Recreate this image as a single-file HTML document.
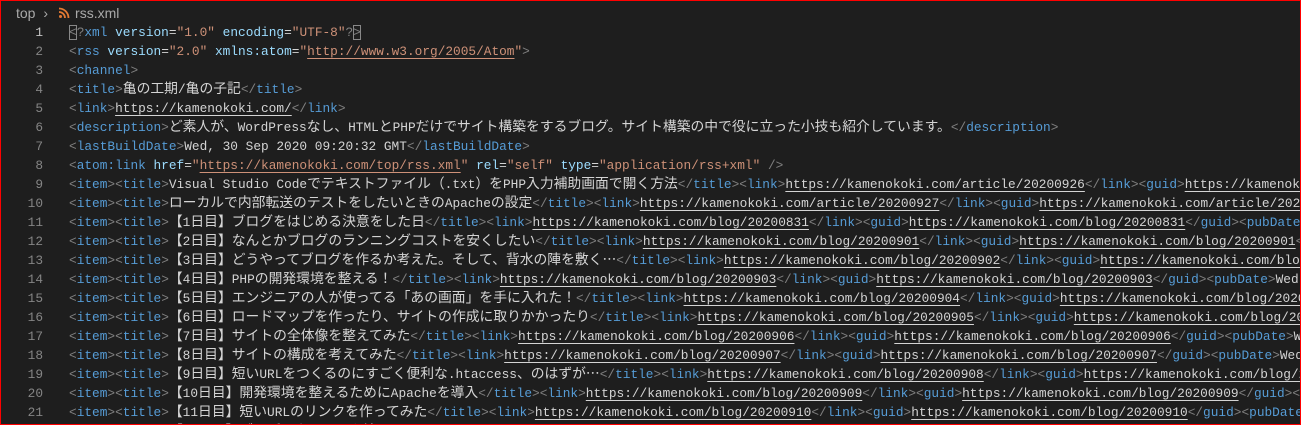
<!DOCTYPE html><html><head><meta charset="utf-8"><style>
html,body{margin:0;padding:0;background:#1e1e1e;}
#w{position:relative;width:1299px;height:423px;border:1px solid #f00;overflow:hidden;background:#1e1e1e;}
#bc{position:absolute;left:15px;top:3px;height:18px;font:14px "Liberation Sans","Noto Sans CJK JP",sans-serif;color:#a9a9a9;line-height:18px;white-space:nowrap}
#bc svg{vertical-align:-1px}
.ln{position:absolute;left:0;width:42px;text-align:right;color:#858585;font:12.8px "Liberation Mono",monospace;line-height:19px}
.cl{position:absolute;left:68px;height:19px;white-space:pre;color:#d4d4d4;font:12.8px "Liberation Mono","Noto Sans CJK JP",monospace;line-height:19px}
.j{font-family:"Noto Sans CJK JP",sans-serif;font-size:13.8px;line-height:1}
.p{color:#808080}.t{color:#569cd6}.a{color:#9cdcfe}.s{color:#ce9178}.u{text-decoration:underline;text-underline-offset:3px}
.bx{outline:1px solid #888;outline-offset:-1px}
</style></head><body><div id="w">
<div id="bc">top <span style="margin:0 10px 0 4px">&#x203A;</span><svg width="12" height="12" viewBox="0 0 12 12"><circle cx="2.5" cy="9.5" r="1.5" fill="#e37933"/><path d="M1 5a6 6 0 0 1 6 6M1 1.5a9.5 9.5 0 0 1 9.5 9.5" stroke="#e37933" stroke-width="1.8" fill="none"/></svg><span style="margin-left:5px">rss.xml</span></div>
<div id="code"></div>
</div>
<script>
var L=[
'<?xml version="1.0" encoding="UTF-8"?>',
'<rss version="2.0" xmlns:atom="http://www.w3.org/2005/Atom">',
'<channel>',
'<title>亀の工期/亀の子記</title>',
'<link>https://kamenokoki.com/</link>',
'<description>ど素人が、WordPressなし、HTMLとPHPだけでサイト構築をするブログ。サイト構築の中で役に立った小技も紹介しています。</description>',
'<lastBuildDate>Wed, 30 Sep 2020 09:20:32 GMT</lastBuildDate>',
'<atom:link href="https://kamenokoki.com/top/rss.xml" rel="self" type="application/rss+xml" />'
];
function it(t,u){return '<item><title>'+t+'</title><link>'+u+'</link><guid>'+u+'</guid><pubDate>Wed, 30 Sep 2020</pubDate></item>';}
L.push(it('Visual Studio Codeでテキストファイル（.txt）をPHP入力補助画面で開く方法','https://kamenokoki.com/article/20200926'));
L.push(it('ローカルで内部転送のテストをしたいときのApacheの設定','https://kamenokoki.com/article/20200927'));
var T=[['【1日目】ブログをはじめる決意をした日','0831'],['【2日目】なんとかブログのランニングコストを安くしたい','0901'],['【3日目】どうやってブログを作るか考えた。そして、背水の陣を敷く…','0902'],['【4日目】PHPの開発環境を整える！','0903'],['【5日目】エンジニアの人が使ってる「あの画面」を手に入れた！','0904'],['【6日目】ロードマップを作ったり、サイトの作成に取りかかったり','0905'],['【7日目】サイトの全体像を整えてみた','0906'],['【8日目】サイトの構成を考えてみた','0907'],['【9日目】短いURLをつくるのにすごく便利な.htaccess、のはずが…','0908'],['【10日目】開発環境を整えるためにApacheを導入','0909'],['【11日目】短いURLのリンクを作ってみた','0910'],['【12日目】ブログのタイトルを決めてみた','0911']];
T.forEach(function(x){L.push(it(x[0],'https://kamenokoki.com/blog/2020'+x[1]));});
function esc(s){return s.replace(/&/g,'&amp;').replace(/</g,'&lt;').replace(/>/g,'&gt;');}
function cjk(s){return esc(s).replace(/([^\x00-\x7f]+)/g,'<span class="j">$1</span>');}
function tag(s){
 var m=s.match(/^(<\/?\??)([\w:]+)(.*?)(\s*\/?\??>)$/);
 var r='<span class="p">'+esc(m[1])+'</span><span class="t">'+m[2]+'</span>';
 r+=m[3].replace(/([\w:]+)(=)("[^"]*")/g,function(_,a,e,v){
  var u=/^"http/.test(v)?'"<span class="u">'+esc(v.slice(1,-1))+'</span>"':esc(v);
  return '<span class="a">'+a+'</span>'+e+'<span class="s">'+u+'</span>';});
 r+='<span class="p">'+esc(m[4])+'</span>';return r;}
var h='';
L.forEach(function(l,i){
 var y=22+i*19,out='';
 l.split(/(<[^>]*>)/).forEach(function(p){if(!p)return;
  if(p[0]=='<')out+=tag(p);else out+=/^https/.test(p)?'<span class="u">'+cjk(p)+'</span>':cjk(p);});
 if(i==0){out=out.replace('&lt;','<span class="bx">&lt;</span>').replace(/\?&gt;<\/span>$/,'?<span class="bx">&gt;</span></span>');}
 h+='<div class="ln" style="top:'+y+'px;'+(i==0?'color:#c6c6c6':'')+'">'+(i+1)+'</div><div class="cl" style="top:'+y+'px">'+out+'</div>';
});
document.getElementById('code').innerHTML=h;
</script></body></html>
